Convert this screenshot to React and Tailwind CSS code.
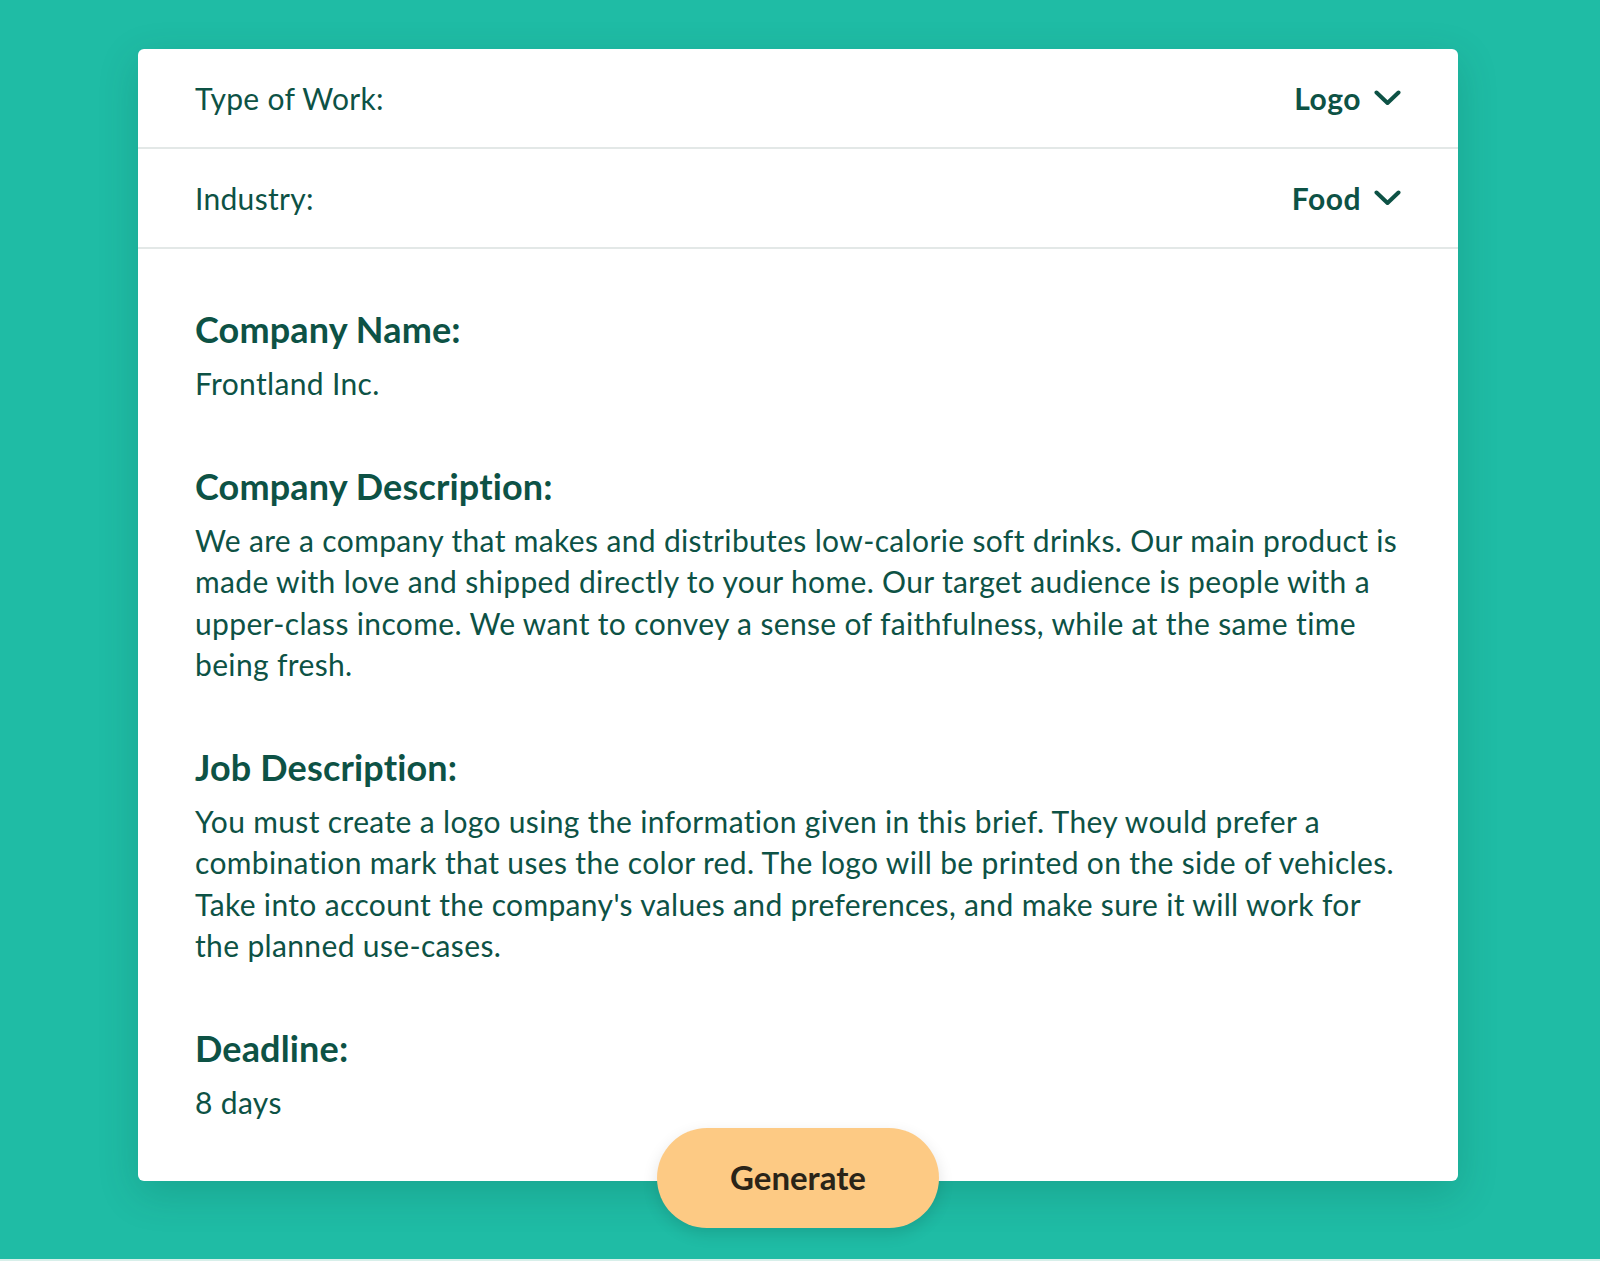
import React from "react";

const font = { fontFamily: "Lato, 'Noto Sans', sans-serif" };

function Chevron() {
  return (
    <svg width="27" height="16" viewBox="0 0 27 16" fill="none" className="shrink-0">
      <polyline points="2.5,2.5 13.5,13 24.5,2.5" stroke="#0d5245" strokeWidth="4" strokeLinecap="round" strokeLinejoin="round" />
    </svg>
  );
}

function SelectRow({ label, value }) {
  return (
    <div className="h-[100px] border-b-2 border-[#e3e8e7] px-[57px] flex items-center justify-between">
      <span className="text-[30px] leading-[40px] tracking-[0.3px] text-[#0d5245]">{label}</span>
      <span className="flex items-center gap-[13px]">
        <span className="text-[30px] leading-[40px] tracking-[0.5px] font-bold text-[#0d5245]">{value}</span>
        <Chevron />
      </span>
    </div>
  );
}

function Section({ title, lines, first }) {
  return (
    <div className={first ? "" : "mt-[59px]"}>
      <h2 className="text-[36px] leading-[44px] tracking-[0.15px] font-bold text-[#0d5245]">{title}</h2>
      <p className="mt-[12px] text-[30px] leading-[41.5px] tracking-[0.35px] text-[#0d5245] whitespace-nowrap">
        {lines.map((l, i) => (
          <React.Fragment key={i}>
            {l}
            {i < lines.length - 1 && <br />}
          </React.Fragment>
        ))}
      </p>
    </div>
  );
}

export default function App() {
  return (
    <div style={font} className="min-h-[1261px] bg-[#1fbca5] pt-[49px] px-[138px] border-b-2 border-[#d8efea]">
      <div className="relative w-[1320px] bg-white rounded-md shadow-[0_12px_40px_rgba(0,60,50,0.18)]">
        <SelectRow label="Type of Work:" value="Logo" />
        <SelectRow label="Industry:" value="Food" />
        <div className="px-[57px] pt-[58px] pb-[58px]">
          <Section first title="Company Name:" lines={["Frontland Inc."]} />
          <Section
            title="Company Description:"
            lines={[
              "We are a company that makes and distributes low-calorie soft drinks. Our main product is",
              "made with love and shipped directly to your home. Our target audience is people with a",
              "upper-class income. We want to convey a sense of faithfulness, while at the same time",
              "being fresh.",
            ]}
          />
          <Section
            title="Job Description:"
            lines={[
              "You must create a logo using the information given in this brief. They would prefer a",
              "combination mark that uses the color red. The logo will be printed on the side of vehicles.",
              "Take into account the company's values and preferences, and make sure it will work for",
              "the planned use-cases.",
            ]}
          />
          <Section title="Deadline:" lines={["8 days"]} />
        </div>
        <button className="absolute left-1/2 -translate-x-1/2 bottom-[-47px] w-[282px] h-[100px] rounded-full bg-[#fdca84] text-[33px] font-bold text-[#2a2418] shadow-[0_6px_16px_rgba(0,0,0,0.12)]">
          Generate
        </button>
      </div>
    </div>
  );
}
